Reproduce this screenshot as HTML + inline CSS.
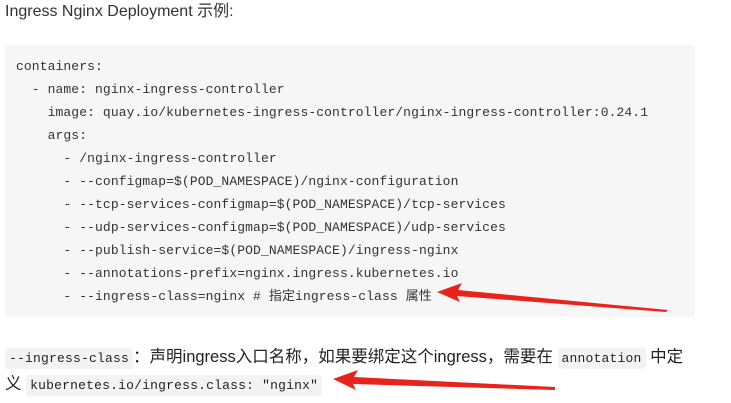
<!DOCTYPE html>
<html><head><meta charset="utf-8"><style>
body{margin:0;background:#fff;width:731px;height:403px;overflow:hidden;position:relative;font-family:"Liberation Sans","Noto Sans CJK SC",sans-serif;color:#333}
.t{position:absolute;left:5px;top:1px;font-size:16px;line-height:22px}
pre{position:absolute;left:5px;top:45px;width:690px;height:272px;margin:0;background:#f6f6f6;border-radius:4px;box-sizing:border-box;padding:10px 0 0 11px;font-family:"Liberation Mono","Noto Sans CJK SC",monospace;font-size:13px;letter-spacing:0.1px;line-height:23px;color:#333}
.p{position:absolute;left:5px;font-size:16.5px;color:#222;white-space:nowrap}
code{font-family:"Liberation Mono",monospace;font-size:13px;letter-spacing:0.2px;background:#f3f3f3;border-radius:3px;padding:3px 4px}
svg{position:absolute;left:0;top:0}
</style></head><body>
<div class="t">Ingress Nginx Deployment 示例:</div>
<pre>containers:
  - name: nginx-ingress-controller
    image: quay.io/kubernetes-ingress-controller/nginx-ingress-controller:0.24.1
    args:
      - /nginx-ingress-controller
      - --configmap=$(POD_NAMESPACE)/nginx-configuration
      - --tcp-services-configmap=$(POD_NAMESPACE)/tcp-services
      - --udp-services-configmap=$(POD_NAMESPACE)/udp-services
      - --publish-service=$(POD_NAMESPACE)/ingress-nginx
      - --annotations-prefix=nginx.ingress.kubernetes.io
      - --ingress-class=nginx # 指定ingress-class 属性</pre>
<div class="p" style="top:343px"><code>--ingress-class</code>：声明ingress入口名称，如果要绑定这个ingress，需要在 <code>annotation</code> 中定</div>
<div class="p" style="top:370px">义 <code>kubernetes.io/ingress.class: "nginx"</code></div>
<svg width="731" height="403">
<polygon points="437,292 462,283 458,290 668,310 666,312 457,296 460,302" fill="#e8231c"/>
<polygon points="333,379 358,370 354,377 555,387 555,390 353,384 356,390" fill="#e8231c"/>
</svg>
</body></html>
